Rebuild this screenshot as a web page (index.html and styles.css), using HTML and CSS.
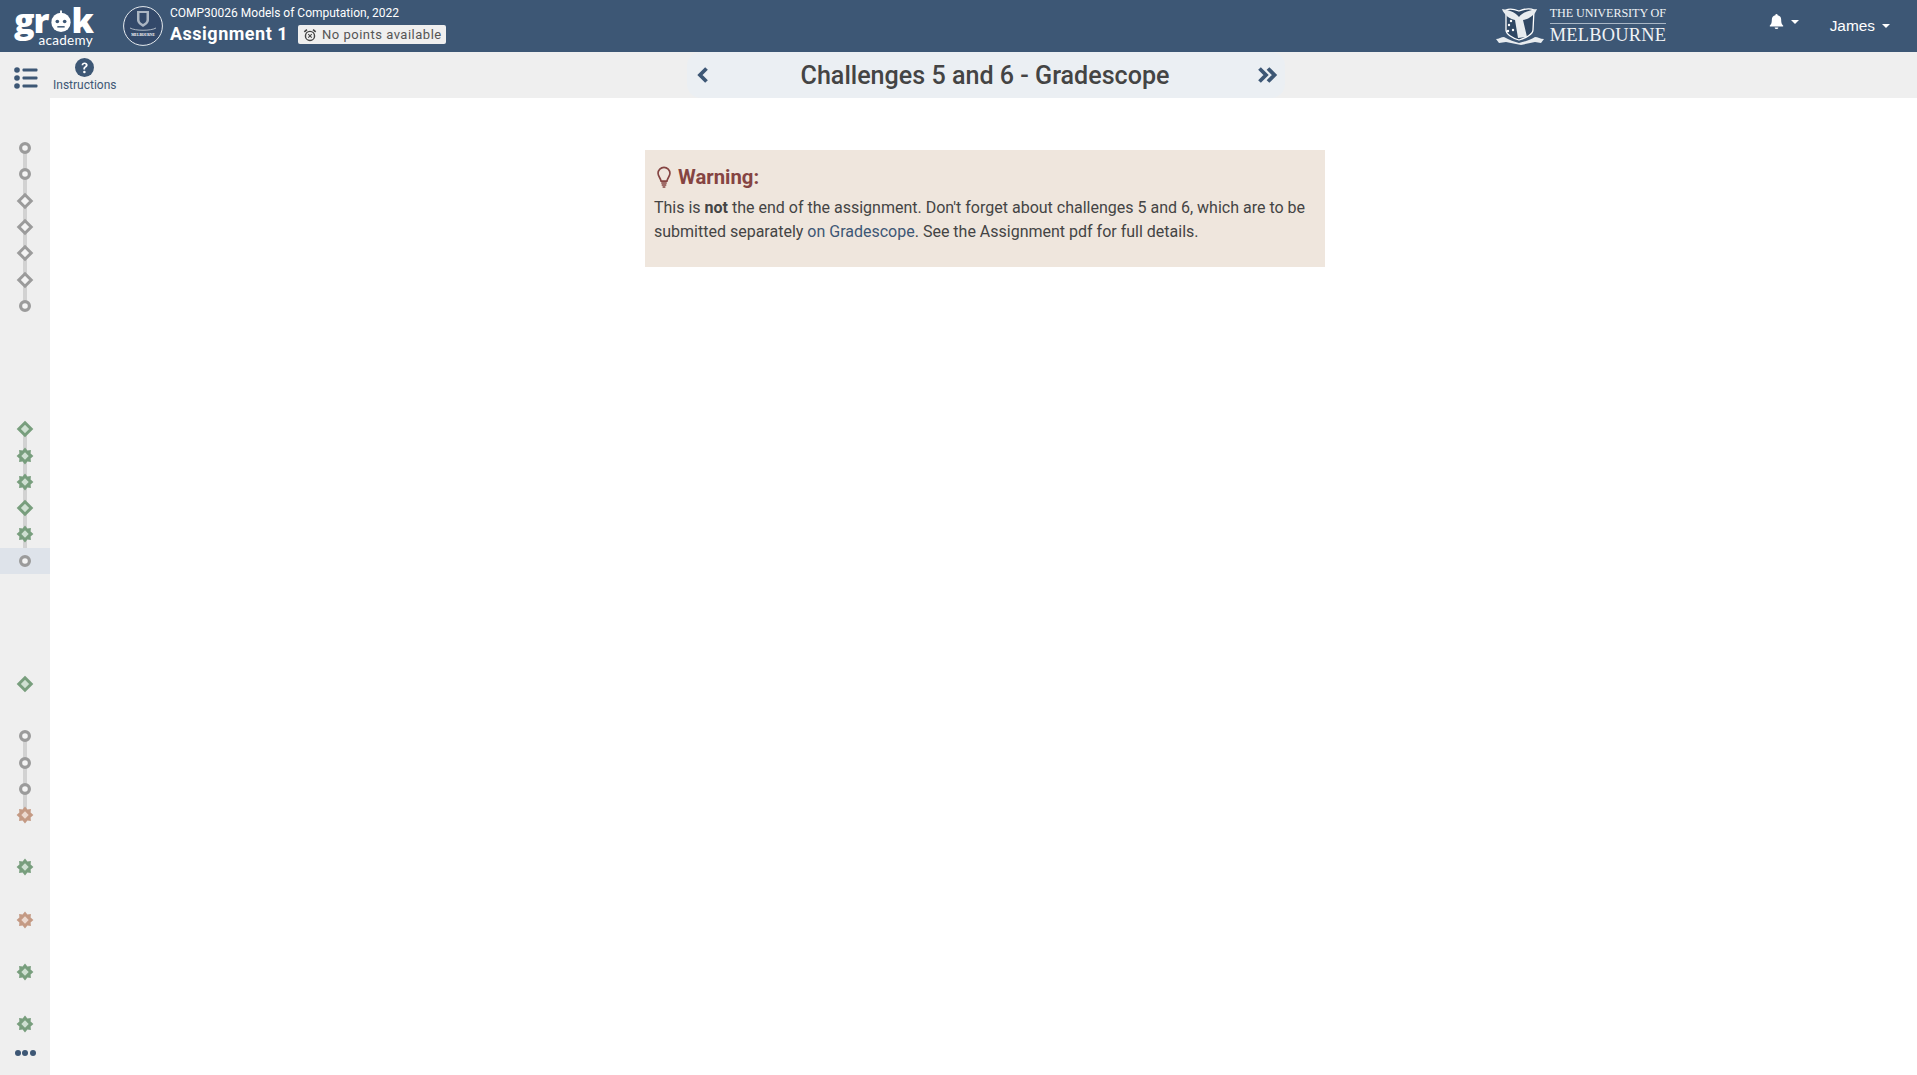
FILE: index.html
```html
<!DOCTYPE html>
<html lang="en">
<head>
<meta charset="utf-8">
<title>Challenges 5 and 6 - Gradescope</title>
<link rel="stylesheet" href="styles.css">
</head>
<body>
<svg class="defs" width="0" height="0" aria-hidden="true">
  <symbol id="ring" viewBox="0 0 20 20"><circle cx="10" cy="10" r="4.4" fill="var(--fill)" stroke="currentColor" stroke-width="3.2"/></symbol>
  <symbol id="diamond" viewBox="0 0 20 20"><path d="M10 3.800 16.200 10 10 16.200 3.800 10Z" fill="var(--fill)" stroke="currentColor" stroke-width="3"/></symbol>
  <symbol id="burst" viewBox="0 0 20 20"><path d="M10 1.600 12.400 4.400 15.900 4.100 15.600 7.600 18.400 10 15.600 12.400 15.900 15.900 12.400 15.600 10 18.400 7.600 15.600 4.100 15.900 4.400 12.400 1.600 10 4.400 7.600 4.100 4.100 7.600 4.400Z" fill="currentColor"/><path d="M10 6.300 13.700 10 10 13.700 6.300 10Z" fill="var(--fill)"/></symbol>
</svg>
<div class="page">
  <header class="topbar">
    <a class="grok">
      <span class="grok-word">gr<svg class="grok-o" viewBox="0 0 24 24"><circle cx="12" cy="13" r="10.500" fill="#fff"/><rect x="11" y="0" width="2" height="4" fill="#fff"/><circle cx="8" cy="12" r="2" fill="#3d5775"/><circle cx="16" cy="12" r="2" fill="#3d5775"/><rect x="8" y="17" width="8" height="1.600" fill="#3d5775"/></svg>k</span>
      <span class="grok-sub">academy</span>
    </a>
    <svg class="seal" viewBox="0 0 40 40">
      <circle cx="20" cy="20" r="19.400" fill="#33496a" stroke="#e6ebef" stroke-width="1"/>
      <path d="M14 5h12v9c0 3-3 5-6 7-3-2-6-4-6-7Z" fill="#dfe5ea" opacity=".7"/>
      <path d="M16.500 7h7v7c0 2-2 3-3.500 4-1.500-1-3.500-2-3.500-4Z" fill="#33496a"/>
      <path d="M7 22c5 3 21 3 26 0" fill="none" stroke="#dfe5ea" stroke-width=".7"/>
      <text x="20" y="29.500" class="seal-text">MELBOURNE</text>
    </svg>
    <div class="course">
      <div class="course-name">COMP30026 Models of Computation, 2022</div>
      <div class="course-row">
        <span class="course-title">Assignment 1</span>
        <span class="badge">
          <svg class="alarm" viewBox="0 0 16 16"><circle cx="8" cy="9" r="5.200" fill="none" stroke="#444" stroke-width="1.600"/><path d="M6 7l4 4M10 7l-4 4" stroke="#444" stroke-width="1.200"/><path d="M1.500 4.500 4.500 1.800M14.500 4.500 11.500 1.800" stroke="#444" stroke-width="1.800"/></svg>
          No points available
        </span>
      </div>
    </div>
    <div class="uni">
      <svg class="crest" viewBox="0 0 48 40">
        <path d="M10 4c4-2 8-1 13 1 5-2 11-3 15-1l-1 20c0 4-7 8-14 10-7-2-13-6-13-10Z" fill="#2f4763" stroke="#fff" stroke-width="1.300"/>
        <path d="M6 3c7 1 13 3 17 8 4-5 11-7 18-8-2 6-8 10-14 11l4 17-9 1-3-18C14 13 8 9 6 3Z" fill="#e8ecef"/>
        <circle cx="13" cy="19" r="1.200" fill="#fff"/><circle cx="17" cy="24" r="1.200" fill="#fff"/><circle cx="12" cy="25" r="1.200" fill="#fff"/><circle cx="15" cy="15" r="1.200" fill="#fff"/>
        <path d="M0 33c3 0 5-2 8-2 5 3 11 5 15 6 5-1 11-3 16-6 3 0 5 2 9 2l-3 4-6-1-14 3-15-3-7 1Z" fill="#e8ecef"/>
      </svg>
      <div class="uni-text">
        <div class="uni-top">THE UNIVERSITY OF</div>
        <div class="uni-name">MELBOURNE</div>
      </div>
    </div>
    <div class="bell">
      <svg class="bell-icon" viewBox="0 0 16 16"><path d="M8 0a1.200 1.200 0 0 1 1.200 1.300C11.600 1.800 13 3.700 13 6c0 4 1 5 2.200 6.400.3.400 0 .9-.5.9H1.300c-.5 0-.8-.5-.5-.9C2 11 3 10 3 6c0-2.300 1.400-4.200 3.800-4.700A1.200 1.200 0 0 1 8 0ZM6 14.300h4A2 1.700 0 0 1 6 14.300Z" fill="#fff"/></svg>
      <span class="caret"></span>
    </div>
    <div class="user">James<span class="caret"></span></div>
  </header>

  <div class="toolbar">
    <div class="tools">
      <svg class="list-icon" viewBox="0 0 24 22"><g fill="#3d5775"><circle cx="3" cy="3" r="2.800"/><circle cx="3" cy="11" r="2.800"/><circle cx="3" cy="19" r="2.800"/><rect x="8.500" y="1.500" width="15" height="3" rx="1"/><rect x="8.500" y="9.500" width="15" height="3" rx="1"/><rect x="8.500" y="17.500" width="15" height="3" rx="1"/></g></svg>
      <div class="help">
        <svg class="help-icon" viewBox="0 0 18 18"><circle cx="9" cy="9" r="9" fill="#3d5775"/><path d="M6.200 6.800C6.400 5.200 7.500 4.300 9.100 4.300c1.700 0 2.900 1 2.900 2.400 0 1.200-.7 1.800-1.500 2.300-.7.400-.9.700-.9 1.300v.5H7.900v-.7c0-1 .4-1.600 1.200-2.100.7-.4 1-.7 1-1.200 0-.6-.4-1-1.100-1-.7 0-1.100.4-1.200 1.100Z" fill="#fff"/><circle cx="8.900" cy="13.300" r="1.200" fill="#fff"/></svg>
        <span class="help-label">Instructions</span>
      </div>
    </div>
    <nav class="nav">
      <svg class="chev" viewBox="0 0 14 18"><path d="M10.500 2.500 4 9l6.500 6.500" fill="none" stroke="#3d5775" stroke-width="3.800"/></svg>
      <h1 class="nav-title">Challenges 5 and 6 - Gradescope</h1>
      <svg class="chev-double" viewBox="0 0 22 18"><path d="M2.500 2.500 9 9l-6.500 6.500M11 2.500 17.500 9 11 15.500" fill="none" stroke="#3d5775" stroke-width="3.800"/></svg>
    </nav>
  </div>

  <aside class="rail">
    <div class="group group-first linked">
      <div class="node grey"><svg><use href="#ring"/></svg></div>
      <div class="node grey"><svg><use href="#ring"/></svg></div>
      <div class="node grey"><svg><use href="#diamond"/></svg></div>
      <div class="node grey"><svg><use href="#diamond"/></svg></div>
      <div class="node grey"><svg><use href="#diamond"/></svg></div>
      <div class="node grey"><svg><use href="#diamond"/></svg></div>
      <div class="node grey"><svg><use href="#ring"/></svg></div>
    </div>
    <div class="group gap-xl linked">
      <div class="node green"><svg><use href="#diamond"/></svg></div>
      <div class="node green"><svg><use href="#burst"/></svg></div>
      <div class="node green"><svg><use href="#burst"/></svg></div>
      <div class="node green"><svg><use href="#diamond"/></svg></div>
      <div class="node green"><svg><use href="#burst"/></svg></div>
      <div class="node grey current"><svg><use href="#ring"/></svg></div>
    </div>
    <div class="group gap-xl">
      <div class="node green"><svg><use href="#diamond"/></svg></div>
    </div>
    <div class="group gap-sm linked">
      <div class="node grey"><svg><use href="#ring"/></svg></div>
      <div class="node grey"><svg><use href="#ring"/></svg></div>
      <div class="node grey"><svg><use href="#ring"/></svg></div>
      <div class="node orange"><svg><use href="#burst"/></svg></div>
    </div>
    <div class="group gap-sm"><div class="node green"><svg><use href="#burst"/></svg></div></div>
    <div class="group gap-sm"><div class="node orange"><svg><use href="#burst"/></svg></div></div>
    <div class="group gap-sm"><div class="node green"><svg><use href="#burst"/></svg></div></div>
    <div class="group gap-sm"><div class="node green"><svg><use href="#burst"/></svg></div></div>
    <div class="more"><i></i><i></i><i></i></div>
  </aside>

  <main class="content">
    <section class="warning">
      <h2 class="warning-title">
        <svg class="bulb" viewBox="0 0 16 24"><path d="M8 1.500a6.500 6.500 0 0 0-6.500 6.500c0 3.300 2.600 4.700 3.300 8.500h6.400c.7-3.800 3.300-5.200 3.300-8.500A6.500 6.500 0 0 0 8 1.500Z" fill="none" stroke="#854442" stroke-width="1.800"/><path d="M5 18.500h6M5.500 20.800h5M6.500 23h3" stroke="#854442" stroke-width="1.700"/></svg>
        Warning:
      </h2>
      <p class="warning-text">This is <strong>not</strong> the end of the assignment. Don't forget about challenges 5 and 6, which are to be submitted separately <a class="link">on Gradescope</a>. See the Assignment pdf for full details.</p>
    </section>
  </main>
</div>
</body>
</html>
```
FILE: styles.css
```css
* { box-sizing: border-box; }
html, body { margin: 0; height: 100%; }
body { font-family: Roboto, "Liberation Sans", sans-serif; color: #444; background: #fff; overflow: hidden; }
.defs { position: absolute; }
.page { display: grid; grid-template-columns: 50px 1fr; grid-template-rows: 52px 46px 1fr; height: 1075px; }

.topbar { grid-column: 1 / -1; display: flex; align-items: center; background: #3d5775; color: #fff; }
.grok { display: flex; flex-direction: column; align-items: flex-end; flex: none; width: 93px; margin-top: -1px; line-height: 1; }
.grok-word { display: flex; align-items: flex-end; height: 30px; font: 800 34px/30px "Open Sans", sans-serif; letter-spacing: -1px; color: #fff; }
.grok-o { width: 22px; height: 23px; margin: 0 0 2px 1px; }
.grok-sub { font: 400 13.500px/12px Lato, sans-serif; letter-spacing: .3px; margin-top: -1px; }
.seal { width: 40px; height: 40px; margin-left: 30px; flex: none; }
.seal-text { font: 700 3.600px "Liberation Serif", serif; fill: #fff; text-anchor: middle; }
.course { align-self: flex-start; margin: 5px 0 0 7px; }
.course-name { font-size: 12px; line-height: 16px; }
.course-row { display: flex; align-items: center; height: 24px; }
.course-title { font-size: 18px; font-weight: 700; letter-spacing: .5px; }
.badge { display: flex; align-items: center; gap: 5px; margin: 3px 0 0 10px; height: 19px; padding: 0 4px 0 5px; background: #efefef; border-radius: 2px; color: #555; font-size: 13px; letter-spacing: .5px; }
.alarm { width: 14px; height: 14px; }
.uni { display: flex; align-items: center; margin-left: auto; margin-top: -2px; }
.crest { width: 48px; height: 40px; margin-top: 2px; }
.uni-text { margin-left: 6px; width: 116px; font-family: "Liberation Serif", serif; color: #f0f3f5; }
.uni-top { font-size: 12.200px; line-height: 15px; border-bottom: 1px solid #a9b7c6; padding-bottom: 2px; white-space: nowrap; letter-spacing: -.1px; }
.uni-name { font-size: 18.400px; line-height: 20px; letter-spacing: .25px; padding-top: 1px; white-space: nowrap; }
.bell { display: flex; align-items: center; margin-left: 103px; margin-top: -9px; }
.bell-icon { width: 15px; height: 15px; }
.caret { display: inline-block; width: 0; height: 0; margin-left: 7px; border: 4px solid transparent; border-top-color: #fff; border-bottom: 0; }
.user { display: flex; align-items: center; margin-left: 31px; margin-right: 27px; font: 15.400px "Liberation Sans", sans-serif; }

.toolbar { grid-column: 1 / -1; display: flex; background: #efefef; }
.tools { display: flex; width: 687px; }
.list-icon { width: 24px; height: 22px; margin: 15px 0 0 14px; }
.help { display: flex; flex-direction: column; align-items: center; margin-left: 15px; padding-top: 6px; }
.help-icon { width: 19px; height: 19px; }
.help-label { font-size: 12px; line-height: 14px; margin-top: 1px; color: #3d5775; }
.nav { display: flex; align-items: center; justify-content: space-between; width: 598px; padding: 0 6px 0 9px; background: #ebeff3; border-radius: 14px; }
.chev { width: 14px; height: 18px; margin-right: 3px; }
.chev-double { width: 22px; height: 18px; }
.nav-title { margin: 0; font-size: 25.100px; font-weight: 500; color: #444; }

.rail { background: #efefef; overflow: hidden; }
.group { display: flex; flex-direction: column; }
.group-first { margin-top: 37px; }
.gap-xl { margin-top: 97px; }
.gap-sm { margin-top: 26px; }
.node { position: relative; display: flex; align-items: center; justify-content: center; height: 26.300px; --fill: #f4f4f4; }
.node svg { position: relative; width: 20px; height: 20px; }
.linked .node:not(:last-child)::after { content: ""; position: absolute; left: 23px; width: 4px; top: 50%; height: 100%; background: #d2d2d2; }
.linked .node svg { z-index: 1; }
.grey { color: #9b9b9b; }
.green { color: #789e7d; --fill: #cfe0d2; }
.orange { color: #c49a84; --fill: #ecd9cf; }
.current { background: #dee3ea; }
.more { display: flex; justify-content: center; gap: 1.500px; margin-top: 12px; }
.more i { width: 6px; height: 6px; border-radius: 50%; background: #3d5775; }

.content { padding: 52px 0 0 595px; }
.warning { width: 680px; height: 117px; padding: 15px 9px 0; background: #efe6dd; }
.warning-title { display: flex; align-items: center; gap: 6px; margin: 0; padding-left: 2px; font-size: 20.300px; font-weight: 700; line-height: 24px; color: #854442; }
.bulb { width: 16px; height: 22px; }
.warning-text { margin: 7px 0 0; font-size: 16px; line-height: 24px; color: #444; }
.link { color: #3d5775; }
```
